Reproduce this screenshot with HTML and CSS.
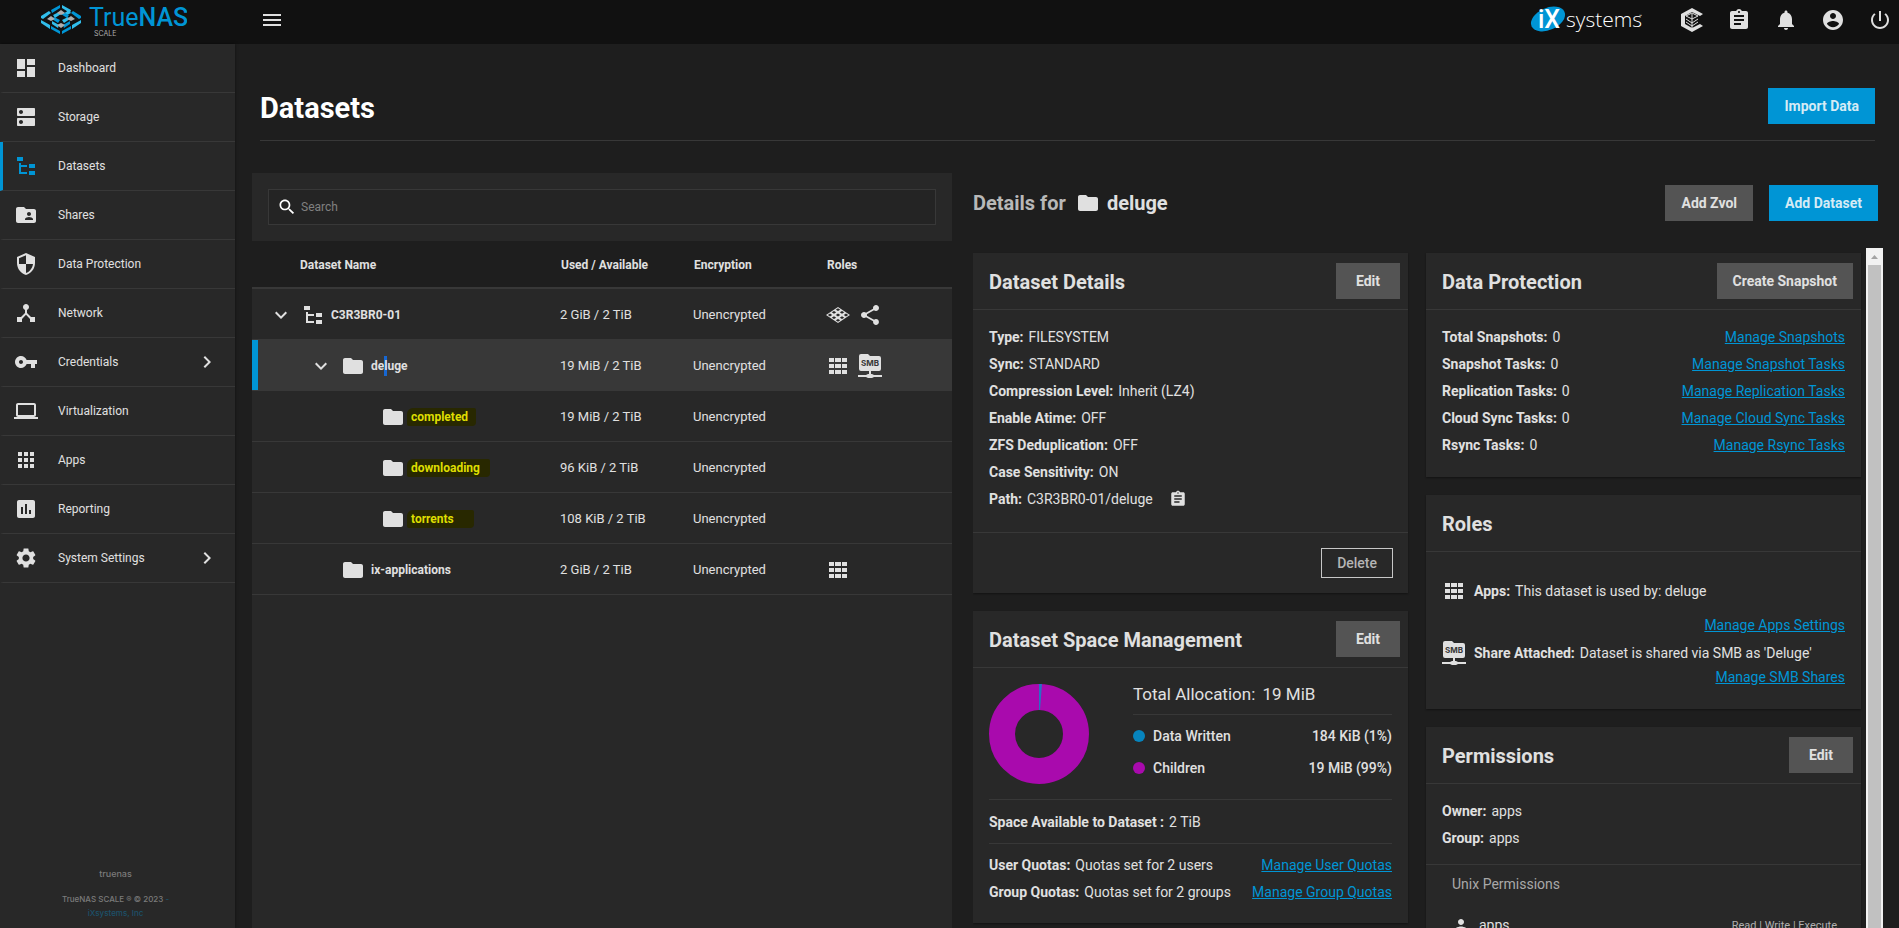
FILE: index.html
```html
<!DOCTYPE html>
<html lang="en">
<head>
    <meta charset="UTF-8">
    <meta name="viewport" content="width=device-width, initial-scale=1.0">
    <title>TrueNAS - Datasets</title>
    <link rel="stylesheet" href="styles.css">
</head>
<body>
    <!-- Icon sprite -->
    <svg class="sprite" aria-hidden="true">
        <symbol id="i-menu" viewBox="0 0 24 24"><path d="M3 18h18v-2H3v2zm0-5h18v-2H3v2zm0-7v2h18V6H3z"/></symbol>
        <symbol id="i-dashboard" viewBox="0 0 24 24"><path d="M3 13h8V3H3v10zm0 8h8v-6H3v6zm10 0h8V11h-8v10zm0-18v6h8V3h-8z"/></symbol>
        <symbol id="i-storage" viewBox="0 0 24 24"><path d="M20 13H4c-.55 0-1 .45-1 1v6c0 .55.45 1 1 1h16c.55 0 1-.45 1-1v-6c0-.55-.45-1-1-1zM7 19c-1.1 0-2-.9-2-2s.9-2 2-2 2 .9 2 2-.9 2-2 2zM20 3H4c-.55 0-1 .45-1 1v6c0 .55.45 1 1 1h16c.55 0 1-.45 1-1V4c0-.55-.45-1-1-1zM7 9c-1.1 0-2-.9-2-2s.9-2 2-2 2 .9 2 2-.9 2-2 2z"/></symbol>
        <symbol id="i-tree" viewBox="0 0 24 24"><path d="M3 3h6v4H3V3m12 7h6v4h-6v-4m0 7h6v4h-6v-4m-2-4H7v5h6v2H5V9h2v2h6v2z"/></symbol>
        <symbol id="i-shares" viewBox="0 0 24 24"><path d="M20 6h-8l-2-2H4c-1.1 0-1.99.9-1.99 2L2 18c0 1.1.9 2 2 2h16c1.1 0 2-.9 2-2V8c0-1.1-.9-2-2-2zm-5 3c1.1 0 2 .9 2 2s-.9 2-2 2-2-.9-2-2 .9-2 2-2zm4 8h-8v-1c0-1.33 2.67-2 4-2s4 .67 4 2v1z"/></symbol>
        <symbol id="i-shield" viewBox="0 0 24 24"><path d="M12 1L3 5v6c0 5.55 3.84 10.74 9 12 5.16-1.26 9-6.45 9-12V5l-9-4zm0 10.99h7c-.53 4.12-3.28 7.79-7 8.94V12H5V6.3l7-3.11v8.8z"/></symbol>
        <symbol id="i-hub" viewBox="0 0 24 24"><path d="M17 16l-4-4V8.82C14.16 8.4 15 7.3 15 6c0-1.66-1.34-3-3-3S9 4.34 9 6c0 1.3.84 2.4 2 2.82V12l-4 4H3v5h5v-3.05l4-4.2 4 4.2V21h5v-5h-4z"/></symbol>
        <symbol id="i-key" viewBox="0 0 24 24"><path d="M12.65 10C11.83 7.67 9.61 6 7 6c-3.31 0-6 2.69-6 6s2.69 6 6 6c2.61 0 4.83-1.67 5.65-4H17v4h4v-4h2v-4H12.65zM7 14c-1.1 0-2-.9-2-2s.9-2 2-2 2 .9 2 2-.9 2-2 2z"/></symbol>
        <symbol id="i-laptop" viewBox="0 0 24 24"><path d="M20 18c1.1 0 1.99-.9 1.99-2L22 6c0-1.1-.9-2-2-2H4c-1.1 0-2 .9-2 2v10c0 1.1.9 2 2 2H0v2h24v-2h-4zM4 6h16v10H4V6z"/></symbol>
        <symbol id="i-apps" viewBox="0 0 24 24"><path d="M4 8h4V4H4v4zm6 12h4v-4h-4v4zm-6 0h4v-4H4v4zm0-6h4v-4H4v4zm6 0h4v-4h-4v4zm6-10v4h4V4h-4zm-6 4h4V4h-4v4zm6 6h4v-4h-4v4zm0 6h4v-4h-4v4z"/></symbol>
        <symbol id="i-apps-wide" viewBox="0 0 24 24"><path d="M3 4h5v4H3zM9 4h6v4H9zM16 4h5v4h-5zM3 10h5v4H3zM9 10h6v4H9zM16 10h5v4h-5zM3 16h5v4H3zM9 16h6v4H9zM16 16h5v4h-5z"/></symbol>
        <symbol id="i-chart" viewBox="0 0 24 24"><path d="M19 3H5c-1.1 0-2 .9-2 2v14c0 1.1.9 2 2 2h14c1.1 0 2-.9 2-2V5c0-1.1-.9-2-2-2zM9 17H7v-7h2v7zm4 0h-2V7h2v10zm4 0h-2v-4h2v4z"/></symbol>
        <symbol id="i-settings" viewBox="0 0 24 24"><path d="M19.14 12.94c.04-.3.06-.61.06-.94 0-.32-.02-.64-.07-.94l2.03-1.58c.18-.14.23-.41.12-.61l-1.92-3.32c-.12-.22-.37-.29-.59-.22l-2.39.96c-.5-.38-1.03-.7-1.62-.94l-.36-2.54c-.04-.24-.24-.41-.48-.41h-3.84c-.24 0-.43.17-.47.41l-.36 2.54c-.59.24-1.13.57-1.62.94l-2.39-.96c-.22-.08-.47 0-.59.22L2.74 8.87c-.12.21-.08.47.12.61l2.03 1.58c-.05.3-.09.63-.09.94s.02.64.07.94l-2.03 1.58c-.18.14-.23.41-.12.61l1.92 3.32c.12.22.37.29.59.22l2.39-.96c.5.38 1.03.7 1.62.94l.36 2.54c.05.24.24.41.48.41h3.84c.24 0 .44-.17.47-.41l.36-2.54c.59-.24 1.13-.56 1.62-.94l2.39.96c.22.08.47 0 .59-.22l1.92-3.32c.12-.22.07-.47-.12-.61l-2.01-1.58zM12 15.6c-1.98 0-3.6-1.62-3.6-3.6s1.62-3.6 3.6-3.6 3.6 1.62 3.6 3.6-1.62 3.6-3.6 3.6z"/></symbol>
        <symbol id="i-right" viewBox="0 0 24 24"><path d="M10 6L8.59 7.41 13.17 12l-4.58 4.59L10 18l6-6z"/></symbol>
        <symbol id="i-down" viewBox="0 0 24 24"><path d="M7.41 8.59L12 13.17l4.59-4.58L18 10l-6 6-6-6z"/></symbol>
        <symbol id="i-folder" viewBox="0 0 24 24"><path d="M10 4H4c-1.1 0-1.99.9-1.99 2L2 18c0 1.1.9 2 2 2h16c1.1 0 2-.9 2-2V8c0-1.1-.9-2-2-2h-8l-2-2z"/></symbol>
        <symbol id="i-search" viewBox="0 0 24 24"><path d="M15.5 14h-.79l-.28-.27C15.41 12.59 16 11.11 16 9.5 16 5.91 13.09 3 9.5 3S3 5.91 3 9.5 5.91 16 9.5 16c1.61 0 3.09-.59 4.23-1.57l.27.28v.79l5 4.99L20.49 19l-4.99-5zm-6 0C7.01 14 5 11.99 5 9.5S7.01 5 9.5 5 14 7.01 14 9.5 11.99 14 9.5 14z"/></symbol>
        <symbol id="i-share" viewBox="0 0 24 24"><path d="M18 16.08c-.76 0-1.44.3-1.96.77L8.91 12.7c.05-.23.09-.46.09-.7s-.04-.47-.09-.7l7.05-4.11c.54.5 1.25.81 2.04.81 1.66 0 3-1.34 3-3s-1.34-3-3-3-3 1.34-3 3c0 .24.04.47.09.7L8.04 9.81C7.5 9.31 6.79 9 6 9c-1.66 0-3 1.34-3 3s1.34 3 3 3c.79 0 1.5-.31 2.04-.81l7.12 4.16c-.05.21-.08.43-.08.65 0 1.61 1.31 2.92 2.92 2.92s2.92-1.31 2.92-2.92-1.31-2.92-2.92-2.92z"/></symbol>
        <symbol id="i-clipboard" viewBox="0 0 24 24"><path d="M19 3h-4.18C14.4 1.84 13.3 1 12 1c-1.3 0-2.4.84-2.82 2H5c-1.1 0-2 .9-2 2v14c0 1.1.9 2 2 2h14c1.1 0 2-.9 2-2V5c0-1.1-.9-2-2-2zm-7 0c.55 0 1 .45 1 1s-.45 1-1 1-1-.45-1-1 .45-1 1-1zm2 14H7v-2h7v2zm3-4H7v-2h10v2zm0-4H7V7h10v2z"/></symbol>
        <symbol id="i-bell" viewBox="0 0 24 24"><path d="M12 22c1.1 0 2-.9 2-2h-4c0 1.1.89 2 2 2zm6-6v-5c0-3.07-1.64-5.64-4.5-6.32V4c0-.83-.67-1.5-1.5-1.5s-1.5.67-1.5 1.5v.68C7.63 5.36 6 7.92 6 11v5l-2 2v1h16v-1l-2-2z"/></symbol>
        <symbol id="i-account" viewBox="0 0 24 24"><path d="M12 2C6.48 2 2 6.48 2 12s4.48 10 10 10 10-4.48 10-10S17.52 2 12 2zm0 3c1.66 0 3 1.34 3 3s-1.34 3-3 3-3-1.34-3-3 1.34-3 3-3zm0 14.2c-2.5 0-4.71-1.28-6-3.22.03-1.99 4-3.08 6-3.08 1.99 0 5.97 1.09 6 3.08-1.29 1.94-3.5 3.22-6 3.22z"/></symbol>
        <symbol id="i-power" viewBox="0 0 24 24"><path d="M13 3h-2v10h2V3zm4.83 2.17l-1.42 1.42C17.99 7.86 19 9.81 19 12c0 3.87-3.13 7-7 7s-7-3.13-7-7c0-2.19 1.01-4.14 2.58-5.42L6.17 5.17C4.23 6.82 3 9.26 3 12c0 4.97 4.03 9 9 9s9-4.03 9-9c0-2.74-1.23-5.18-3.17-6.83z"/></symbol>
        <symbol id="i-person" viewBox="0 0 24 24"><path d="M12 12c2.21 0 4-1.79 4-4s-1.79-4-4-4-4 1.79-4 4 1.79 4 4 4zm0 2c-2.67 0-8 1.34-8 4v2h16v-2c0-2.66-5.33-4-8-4z"/></symbol>
        <symbol id="i-smb" viewBox="0 0 24 24">
            <path d="M3 0h7l2 2h9a2 2 0 0 1 2 2v11a2 2 0 0 1-2 2h-8v3h1l2 1h8v2h-8l-2 1h-4l-2-1H0v-2h8l2-1h1v-3H3a2 2 0 0 1-2-2V2a2 2 0 0 1 2-2z"/>
            <text x="12" y="12" text-anchor="middle" class="smb-text">SMB</text>
        </symbol>
        <symbol id="i-pool" viewBox="0 0 24 24">
            <path d="M12 4l12 8-12 8L0 12z"/>
            <path class="pool-gaps" d="M12 5.300l2.200 1.400-2.200 1.400-2.200-1.400zM16 7.900l2.200 1.400-2.200 1.400-2.200-1.400zM8 7.900l2.200 1.400L8 10.700 5.800 9.300zM20 10.600l2.200 1.400-2.200 1.400-2.200-1.400zM12 10.600l2.200 1.400-2.200 1.400L9.800 12zM4 10.600L6.200 12 4 13.400 1.800 12zM16 13.300l2.200 1.400-2.200 1.400-2.200-1.400zM8 13.300l2.200 1.400L8 16.100l-2.200-1.400zM12 15.900l2.200 1.400-2.200 1.400-2.200-1.400z"/>
        </symbol>
    </svg>

    <header class="topbar">
        <a class="logo" href="#" aria-label="TrueNAS SCALE">
            <svg width="146" height="36" viewBox="0 0 146 36">
                <g transform="translate(0 3)">
                    <path class="logo-light" d="M0 11l8-5 2 2-8 6-2-1zM21 0l9 5-1 3-8-5zM0 15l9 5v4l-9-6zM40 15l-9 5v4l9-6zM12 10l6-3 2 2-6 4zM22 9l6-4 2 3-6 3zM21 15l6-3 2 2-6 4zM11 16l7 4-1 3-6-4z"/>
                    <path class="logo-blue" d="M19 0l-9 5 1 3 8-5zM40 11l-8-5-2 2 8 6 2-1zM10 21l9 5v3l-9-5zM30 21l-9 5v3l9-5zM19 15l-6-3-2 2 6 4zM28 10l-6-3-2 2 6 4zM29 16l-7 4 1 3 6-4z"/>
                    <path class="logo-grey" d="M20 5l4 3-4 2-4-2zM10 11l4 3-4 2-4-2zM30 11l4 3-4 2-4-2zM20 18l4 2-4 3-4-3z"/>
                </g>
                <text x="48" y="24" class="logo-name">True<tspan class="logo-bold">NAS</tspan></text>
                <text x="53" y="34" class="logo-edition">SCALE</text>
            </svg>
        </a>
        <button class="icon-button" aria-label="Toggle menu"><svg class="icon"><use href="#i-menu"/></svg></button>
        <div class="topbar-actions">
            <a class="ix-logo" href="#" aria-label="iXsystems">
                <svg width="114" height="30" viewBox="0 0 114 30">
                    <ellipse cx="17" cy="14" rx="18" ry="11" transform="rotate(-24 17 14)" class="logo-blue"/>
                    <text x="7" y="23" class="ix-mark">iX</text>
                    <text x="35" y="22" class="ix-name">systems</text>
                    <text x="108" y="13" class="ix-tm">™</text>
                </svg>
            </a>
            <button class="icon-button" aria-label="TrueCommand">
                <svg class="icon" viewBox="0 0 24 24">
                    <path d="M12 0l11 6-3 2-8-4-7 4v8l7 4 8-4 3 2-11 6-11-6V6z"/>
                    <path d="M12 5l6 3-6 3-6-3zM12 6v14M6 11l6 4 6-4M6 14l6 4 6-4" fill="none" stroke="currentColor"/>
                </svg>
            </button>
            <button class="icon-button" aria-label="Jobs"><svg class="icon"><use href="#i-clipboard"/></svg></button>
            <button class="icon-button" aria-label="Alerts"><svg class="icon"><use href="#i-bell"/></svg></button>
            <button class="icon-button" aria-label="Account"><svg class="icon"><use href="#i-account"/></svg></button>
            <button class="icon-button" aria-label="Power"><svg class="icon"><use href="#i-power"/></svg></button>
        </div>
    </header>

    <div class="layout">
        <aside class="sidebar">
            <nav>
                <a class="nav-item" href="#"><svg class="icon"><use href="#i-dashboard"/></svg><span>Dashboard</span></a>
                <a class="nav-item" href="#"><svg class="icon"><use href="#i-storage"/></svg><span>Storage</span></a>
                <a class="nav-item active" href="#"><svg class="icon"><use href="#i-tree"/></svg><span>Datasets</span></a>
                <a class="nav-item" href="#"><svg class="icon"><use href="#i-shares"/></svg><span>Shares</span></a>
                <a class="nav-item" href="#"><svg class="icon"><use href="#i-shield"/></svg><span>Data Protection</span></a>
                <a class="nav-item" href="#"><svg class="icon"><use href="#i-hub"/></svg><span>Network</span></a>
                <a class="nav-item" href="#"><svg class="icon"><use href="#i-key"/></svg><span>Credentials</span><svg class="icon arrow"><use href="#i-right"/></svg></a>
                <a class="nav-item" href="#"><svg class="icon"><use href="#i-laptop"/></svg><span>Virtualization</span></a>
                <a class="nav-item" href="#"><svg class="icon"><use href="#i-apps"/></svg><span>Apps</span></a>
                <a class="nav-item" href="#"><svg class="icon"><use href="#i-chart"/></svg><span>Reporting</span></a>
                <a class="nav-item" href="#"><svg class="icon"><use href="#i-settings"/></svg><span>System Settings</span><svg class="icon arrow"><use href="#i-right"/></svg></a>
            </nav>
            <footer class="sidebar-footer">
                <p class="hostname">truenas</p>
                <p>TrueNAS SCALE ® © 2023 <a href="#">-<br>iXsystems, Inc</a></p>
            </footer>
        </aside>

        <main class="main">
            <div class="page-header">
                <h1>Datasets</h1>
                <button class="btn primary">Import Data</button>
            </div>

            <div class="columns">
                <section class="tree-panel">
                    <div class="search-wrap">
                        <label class="search">
                            <svg class="icon"><use href="#i-search"/></svg>
                            <input type="text" placeholder="Search" aria-label="Search">
                        </label>
                    </div>
                    <table class="tree">
                        <colgroup>
                            <col class="col-name"><col class="col-used"><col class="col-enc"><col>
                        </colgroup>
                        <thead>
                            <tr><th>Dataset Name</th><th>Used / Available</th><th>Encryption</th><th>Roles</th></tr>
                        </thead>
                        <tbody>
                            <tr>
                                <td><div class="node"><svg class="icon"><use href="#i-down"/></svg><svg class="icon kind"><use href="#i-tree"/></svg><span>C3R3BR0-01</span></div></td>
                                <td>2 GiB / 2 TiB</td>
                                <td>Unencrypted</td>
                                <td><div class="roles"><svg class="icon"><use href="#i-pool"/></svg><svg class="icon"><use href="#i-share"/></svg></div></td>
                            </tr>
                            <tr class="selected">
                                <td><div class="node level-1"><svg class="icon"><use href="#i-down"/></svg><svg class="icon kind"><use href="#i-folder"/></svg><span>de<span class="selection">l</span>uge</span></div></td>
                                <td>19 MiB / 2 TiB</td>
                                <td>Unencrypted</td>
                                <td><div class="roles"><svg class="icon"><use href="#i-apps-wide"/></svg><svg class="icon"><use href="#i-smb"/></svg></div></td>
                            </tr>
                            <tr>
                                <td><div class="node level-2"><svg class="icon kind"><use href="#i-folder"/></svg><mark class="mark-short">completed</mark></div></td>
                                <td>19 MiB / 2 TiB</td>
                                <td>Unencrypted</td>
                                <td></td>
                            </tr>
                            <tr>
                                <td><div class="node level-2"><svg class="icon kind"><use href="#i-folder"/></svg><mark>downloading</mark></div></td>
                                <td>96 KiB / 2 TiB</td>
                                <td>Unencrypted</td>
                                <td></td>
                            </tr>
                            <tr>
                                <td><div class="node level-2"><svg class="icon kind"><use href="#i-folder"/></svg><mark class="mark-long">torrents</mark></div></td>
                                <td>108 KiB / 2 TiB</td>
                                <td>Unencrypted</td>
                                <td></td>
                            </tr>
                            <tr>
                                <td><div class="node level-1 leaf"><svg class="icon kind"><use href="#i-folder"/></svg><span>ix-applications</span></div></td>
                                <td>2 GiB / 2 TiB</td>
                                <td>Unencrypted</td>
                                <td><div class="roles"><svg class="icon"><use href="#i-apps-wide"/></svg></div></td>
                            </tr>
                        </tbody>
                    </table>
                </section>

                <section class="details">
                    <div class="details-header">
                        <h2><span class="prefix">Details for</span><svg class="icon"><use href="#i-folder"/></svg>deluge</h2>
                        <button class="btn">Add Zvol</button>
                        <button class="btn primary">Add Dataset</button>
                    </div>

                    <div class="details-body">
                        <div class="cards">
                            <article class="card">
                                <div class="card-header"><h3>Dataset Details</h3><button class="btn edit">Edit</button></div>
                                <div class="card-body">
                                    <p><b>Type:</b> FILESYSTEM</p>
                                    <p><b>Sync:</b> STANDARD</p>
                                    <p><b>Compression Level:</b> Inherit (LZ4)</p>
                                    <p><b>Enable Atime:</b> OFF</p>
                                    <p><b>ZFS Deduplication:</b> OFF</p>
                                    <p><b>Case Sensitivity:</b> ON</p>
                                    <p><b>Path:</b> C3R3BR0-01/deluge <button class="copy" aria-label="Copy path"><svg class="icon"><use href="#i-clipboard"/></svg></button></p>
                                </div>
                                <div class="card-footer"><button class="btn outline">Delete</button></div>
                            </article>

                            <article class="card">
                                <div class="card-header"><h3>Dataset Space Management</h3><button class="btn edit">Edit</button></div>
                                <div class="space">
                                    <div class="chart-row">
                                        <svg class="donut" width="100" height="100" viewBox="0 0 100 100" role="img" aria-label="Space usage">
                                            <circle cx="50" cy="50" r="37" fill="none" stroke="#a90aad" stroke-width="26"/>
                                            <path d="M50 0h3l-2 26h-1z" fill="#2a6fc4"/>
                                        </svg>
                                        <div class="legend">
                                            <h4>Total Allocation: <span>19 MiB</span></h4>
                                            <div class="legend-row"><i class="dot written"></i><span>Data Written</span><span class="value">184 KiB (1%)</span></div>
                                            <div class="legend-row"><i class="dot children"></i><span>Children</span><span class="value">19 MiB (99%)</span></div>
                                        </div>
                                    </div>
                                    <p class="available"><b>Space Available to Dataset :</b> 2 TiB</p>
                                    <div class="quotas">
                                        <p><b>User Quotas:</b> Quotas set for 2 users <a href="#">Manage User Quotas</a></p>
                                        <p><b>Group Quotas:</b> Quotas set for 2 groups <a href="#">Manage Group Quotas</a></p>
                                    </div>
                                </div>
                            </article>
                        </div>

                        <div class="cards">
                            <article class="card">
                                <div class="card-header"><h3>Data Protection</h3><button class="btn">Create Snapshot</button></div>
                                <div class="card-body tasks">
                                    <p><b>Total Snapshots:</b> 0 <a href="#">Manage Snapshots</a></p>
                                    <p><b>Snapshot Tasks:</b> 0 <a href="#">Manage Snapshot Tasks</a></p>
                                    <p><b>Replication Tasks:</b> 0 <a href="#">Manage Replication Tasks</a></p>
                                    <p><b>Cloud Sync Tasks:</b> 0 <a href="#">Manage Cloud Sync Tasks</a></p>
                                    <p><b>Rsync Tasks:</b> 0 <a href="#">Manage Rsync Tasks</a></p>
                                </div>
                            </article>

                            <article class="card">
                                <div class="card-header"><h3>Roles</h3></div>
                                <div class="role-list">
                                    <p class="role apps-role"><svg class="icon"><use href="#i-apps-wide"/></svg><b>Apps:</b> This dataset is used by: deluge</p>
                                    <p class="role-link"><a href="#">Manage Apps Settings</a></p>
                                    <p class="role"><svg class="icon"><use href="#i-smb"/></svg><b>Share Attached:</b> Dataset is shared via SMB as 'Deluge'</p>
                                    <p class="role-link"><a href="#">Manage SMB Shares</a></p>
                                </div>
                            </article>

                            <article class="card">
                                <div class="card-header"><h3>Permissions</h3><button class="btn edit">Edit</button></div>
                                <div class="card-body owner">
                                    <p><b>Owner:</b> apps</p>
                                    <p><b>Group:</b> apps</p>
                                </div>
                                <div class="unix">
                                    <h5>Unix Permissions</h5>
                                    <div class="unix-row"><svg class="icon"><use href="#i-person"/></svg><span>apps</span><small>Read | Write | Execute</small></div>
                                </div>
                            </article>
                        </div>

                        <div class="scrollbar" aria-hidden="true">
                            <svg width="17" height="17" viewBox="0 0 17 17"><path d="M5 11h7l-3.500-4z"/></svg>
                            <div class="thumb"></div>
                        </div>
                    </div>
                </section>
            </div>
        </main>
    </div>
</body>
</html>
```

FILE: styles.css
```css
* {
    margin: 0;
    padding: 0;
    box-sizing: border-box;
}

body {
    display: flex;
    flex-direction: column;
    height: 100vh;
    overflow: hidden;
    background: #1e1e1e;
    color: #e0e0e0;
    font-family: Roboto, sans-serif;
    font-size: 14px;
}

a {
    color: #0095d5;
}

button,
input {
    font-family: inherit;
    color: inherit;
    border: none;
    background: none;
}

button {
    cursor: pointer;
}

.sprite {
    display: none;
}

.icon {
    width: 24px;
    height: 24px;
    flex: none;
    fill: currentColor;
}

.smb-text {
    font: bold 8px Inter, sans-serif;
    fill: #383838;
}

.pool-gaps {
    fill: #282828;
}

/* Top bar */
.topbar {
    display: flex;
    align-items: center;
    flex: none;
    height: 44px;
    padding: 0 7px 4px 0;
    background: #111;
}

.logo {
    width: 235px;
    height: 36px;
    padding-left: 41px;
    margin-right: 25px;
}

.logo-light {
    fill: #31beec;
}

.logo-blue {
    fill: #0095d5;
}

.logo-grey {
    fill: #aeaeae;
}

.logo-name {
    font: 25px Roboto, sans-serif;
    fill: #0095d5;
}

.logo-bold {
    font-weight: 500;
}

.logo-edition {
    font: 7px Inter, sans-serif;
    fill: #aeaeae;
}

.icon-button {
    display: flex;
}

.topbar-actions {
    display: flex;
    align-items: center;
    gap: 23px;
    margin-left: auto;
}

.ix-logo {
    height: 30px;
    margin-right: 12px;
}

.ix-logo svg {
    overflow: visible;
}

.ix-mark {
    font: 500 25px Roboto, sans-serif;
    fill: #fff;
}

.ix-name {
    font: 300 21px "Open Sans", sans-serif;
    fill: #fff;
}

.ix-tm {
    font: 5px Roboto, sans-serif;
    fill: #fff;
}

.layout {
    display: flex;
    flex: 1;
    min-height: 0;
}

/* Sidebar */
.sidebar {
    display: flex;
    flex-direction: column;
    justify-content: space-between;
    width: 235px;
    flex: none;
    background: #282828;
    box-shadow: 0 0 3px rgba(0, 0, 0, 0.5);
}

.nav-item {
    display: flex;
    align-items: center;
    height: 49px;
    padding: 0 16px 0 11px;
    border-left: 3px solid transparent;
    border-bottom: 1px solid #383838;
    color: #e0e0e0;
    font-size: 12px;
    text-decoration: none;
}

.nav-item span {
    margin-left: 20px;
}

.nav-item .arrow {
    margin-left: auto;
}

.nav-item.active {
    border-left-color: #0095d5;
}

.nav-item.active .icon {
    color: #0095d5;
}

.sidebar-footer {
    padding: 0 4px 8px 0;
    text-align: center;
    font: 500 8px/14px Inter, sans-serif;
    color: #7b7b7b;
}

.sidebar-footer a {
    color: #1c516a;
    text-decoration: none;
}

.hostname {
    margin-bottom: 11px;
    font-size: 9px;
}

/* Page */
.main {
    display: flex;
    flex-direction: column;
    flex: 1;
    min-width: 0;
    padding: 0 16px 0 17px;
}

.page-header {
    display: flex;
    align-items: center;
    justify-content: space-between;
    height: 97px;
    margin: 0 8px 32px;
    padding-top: 28px;
    border-bottom: 1px solid #383838;
    flex: none;
}

h1 {
    padding-top: 3px;
    font-size: 29px;
    color: #fff;
}

.btn {
    height: 36px;
    padding: 0 16px;
    background: #545454;
    font-size: 14px;
    font-weight: 700;
}

.btn.primary {
    background: #0095d5;
    color: #d5ebf5;
}

.btn.edit {
    padding: 0 20px;
}

.btn.outline {
    height: 30px;
    padding: 0 15px;
    border: 1px solid #c8c8c8;
    background: none;
    color: #b5b5b5;
    font-weight: 500;
}

.columns {
    display: grid;
    grid-template-columns: minmax(0, 700fr) minmax(0, 910fr);
    gap: 21px;
    flex: 1;
    min-height: 0;
}

/* Dataset tree */
.tree-panel {
    background: #282828;
}

.search-wrap {
    padding: 16px;
}

.search {
    display: flex;
    align-items: center;
    gap: 4px;
    height: 36px;
    padding: 0 8px;
    border: 1px solid #383838;
    background: #242424;
}

.search .icon {
    width: 20px;
    height: 20px;
    color: #fff;
}

.search input {
    flex: 1;
    font-size: 12px;
    outline: none;
}

.search input::placeholder {
    color: #808080;
}

.tree {
    width: 100%;
    table-layout: fixed;
    border-collapse: collapse;
}

.col-name {
    width: 42%;
}

.col-used,
.col-enc {
    width: 19%;
}

.tree th {
    height: 47px;
    padding: 2px 0 0 15px;
    background: #1e1e1e;
    border-bottom: 2px solid #383838;
    text-align: left;
    font-size: 12px;
}

.tree th:first-child {
    padding-left: 48px;
}

.tree td {
    height: 51px;
    padding: 2px 0 0 14px;
    border-bottom: 1px solid #383838;
    font-size: 13px;
}

.tree td:first-child {
    padding-left: 17px;
}

.tree tr.selected {
    background: #383838;
    box-shadow: inset 6px 0 #0095d5;
}

.node,
.roles {
    display: flex;
    align-items: center;
}

.node {
    font-size: 12px;
    font-weight: 700;
}

.node .kind {
    margin: 0 6px 0 8px;
}

.node.level-1 {
    padding-left: 40px;
}

.node.level-1.leaf {
    padding-left: 64px;
}

.node.level-2 {
    padding-left: 104px;
}

.roles {
    gap: 8px;
}

.selection {
    padding: 3px 0;
    background: #1767d2;
}

mark {
    padding: 2px 10px 2px 4px;
    margin-left: -4px;
    border-radius: 6px 2px 4px 2px;
    background: #282800;
    color: #dede00;
}

.mark-short {
    padding-right: 8px;
}

.mark-long {
    padding-right: 20px;
}

/* Details */
.details {
    display: flex;
    flex-direction: column;
    min-height: 0;
}

.details-header {
    display: flex;
    align-items: center;
    gap: 16px;
    flex: none;
    padding: 12px 5px 27px 0;
}

h2 {
    display: flex;
    align-items: center;
    margin-right: auto;
    font-size: 20px;
}

h2 .icon {
    margin: 0 7px 0 10px;
}

.prefix {
    color: #b8b8b8;
}

.details-body {
    display: flex;
    flex: 1;
    min-height: 0;
    overflow: hidden;
}

.cards {
    flex: 1;
    min-width: 0;
    margin-right: 18px;
    padding-top: 5px;
}

.cards + .cards {
    margin-right: 5px;
}

.card {
    margin-bottom: 18px;
    background: #282828;
    box-shadow: 0 1px 2px rgba(0, 0, 0, 0.4);
}

.card-header {
    display: flex;
    align-items: center;
    justify-content: space-between;
    height: 57px;
    padding: 0 8px 0 16px;
    border-bottom: 1px solid #383838;
}

h3 {
    padding-top: 1px;
    font-size: 20px;
}

.card-body {
    padding: 13px 16px 20px;
}

.card-body.tasks {
    padding-bottom: 19px;
}

.card p {
    display: flex;
    align-items: center;
    min-height: 27px;
}

.card b {
    margin-right: 5px;
}

.card p a {
    margin-left: auto;
}

.copy {
    display: flex;
    margin-left: 16px;
}

.copy .icon {
    width: 18px;
    height: 18px;
}

.card-footer {
    padding: 15px;
    border-top: 1px solid #383838;
    text-align: right;
    line-height: 0;
}

/* Space management */
.space {
    padding: 16px 16px 18px;
}

.chart-row {
    display: flex;
    gap: 44px;
    height: 116px;
    border-bottom: 1px solid #383838;
}

.legend {
    flex: 1;
}

h4 {
    height: 31px;
    margin-bottom: 5px;
    border-bottom: 1px solid #383838;
    font: 17px/20px Roboto, sans-serif;
}

h4 span {
    margin-left: 3px;
}

.legend-row {
    display: flex;
    align-items: center;
    height: 32px;
    font-weight: 500;
}

.dot {
    width: 12px;
    height: 12px;
    margin-right: 8px;
    border-radius: 50%;
}

.dot.written {
    background: #0784bd;
}

.dot.children {
    background: #a90aad;
}

.value {
    margin-left: auto;
}

.card .available {
    height: 44px;
    border-bottom: 1px solid #383838;
}

.quotas {
    padding-top: 7px;
}

/* Roles */
.role-list {
    padding: 25px 16px 18px;
}

.role .icon {
    margin-right: 8px;
}

.apps-role {
    margin-bottom: 10px;
}

.card .role-link {
    min-height: 22px;
    margin-bottom: 3px;
}

/* Permissions */
.card-body.owner {
    padding-bottom: 13px;
    border-bottom: 1px solid #383838;
}

.unix {
    padding: 11px 24px 16px 26px;
}

h5 {
    font-size: 14px;
    font-weight: 400;
    color: #a8a8a8;
}

.unix-row {
    display: flex;
    align-items: center;
    padding-top: 24px;
}

.unix-row .icon {
    width: 18px;
    height: 18px;
}

.unix-row span {
    margin-left: 9px;
}

.unix-row small {
    margin-left: auto;
    font-size: 11px;
    color: #b0b0b0;
}

.scrollbar {
    display: flex;
    flex-direction: column;
    width: 17px;
    flex: none;
    background: #f1f1f1;
}

.scrollbar svg {
    fill: #a3a3a3;
}

.thumb {
    flex: 1;
    margin: 0 2px;
    background: #c1c1c1;
}
```
